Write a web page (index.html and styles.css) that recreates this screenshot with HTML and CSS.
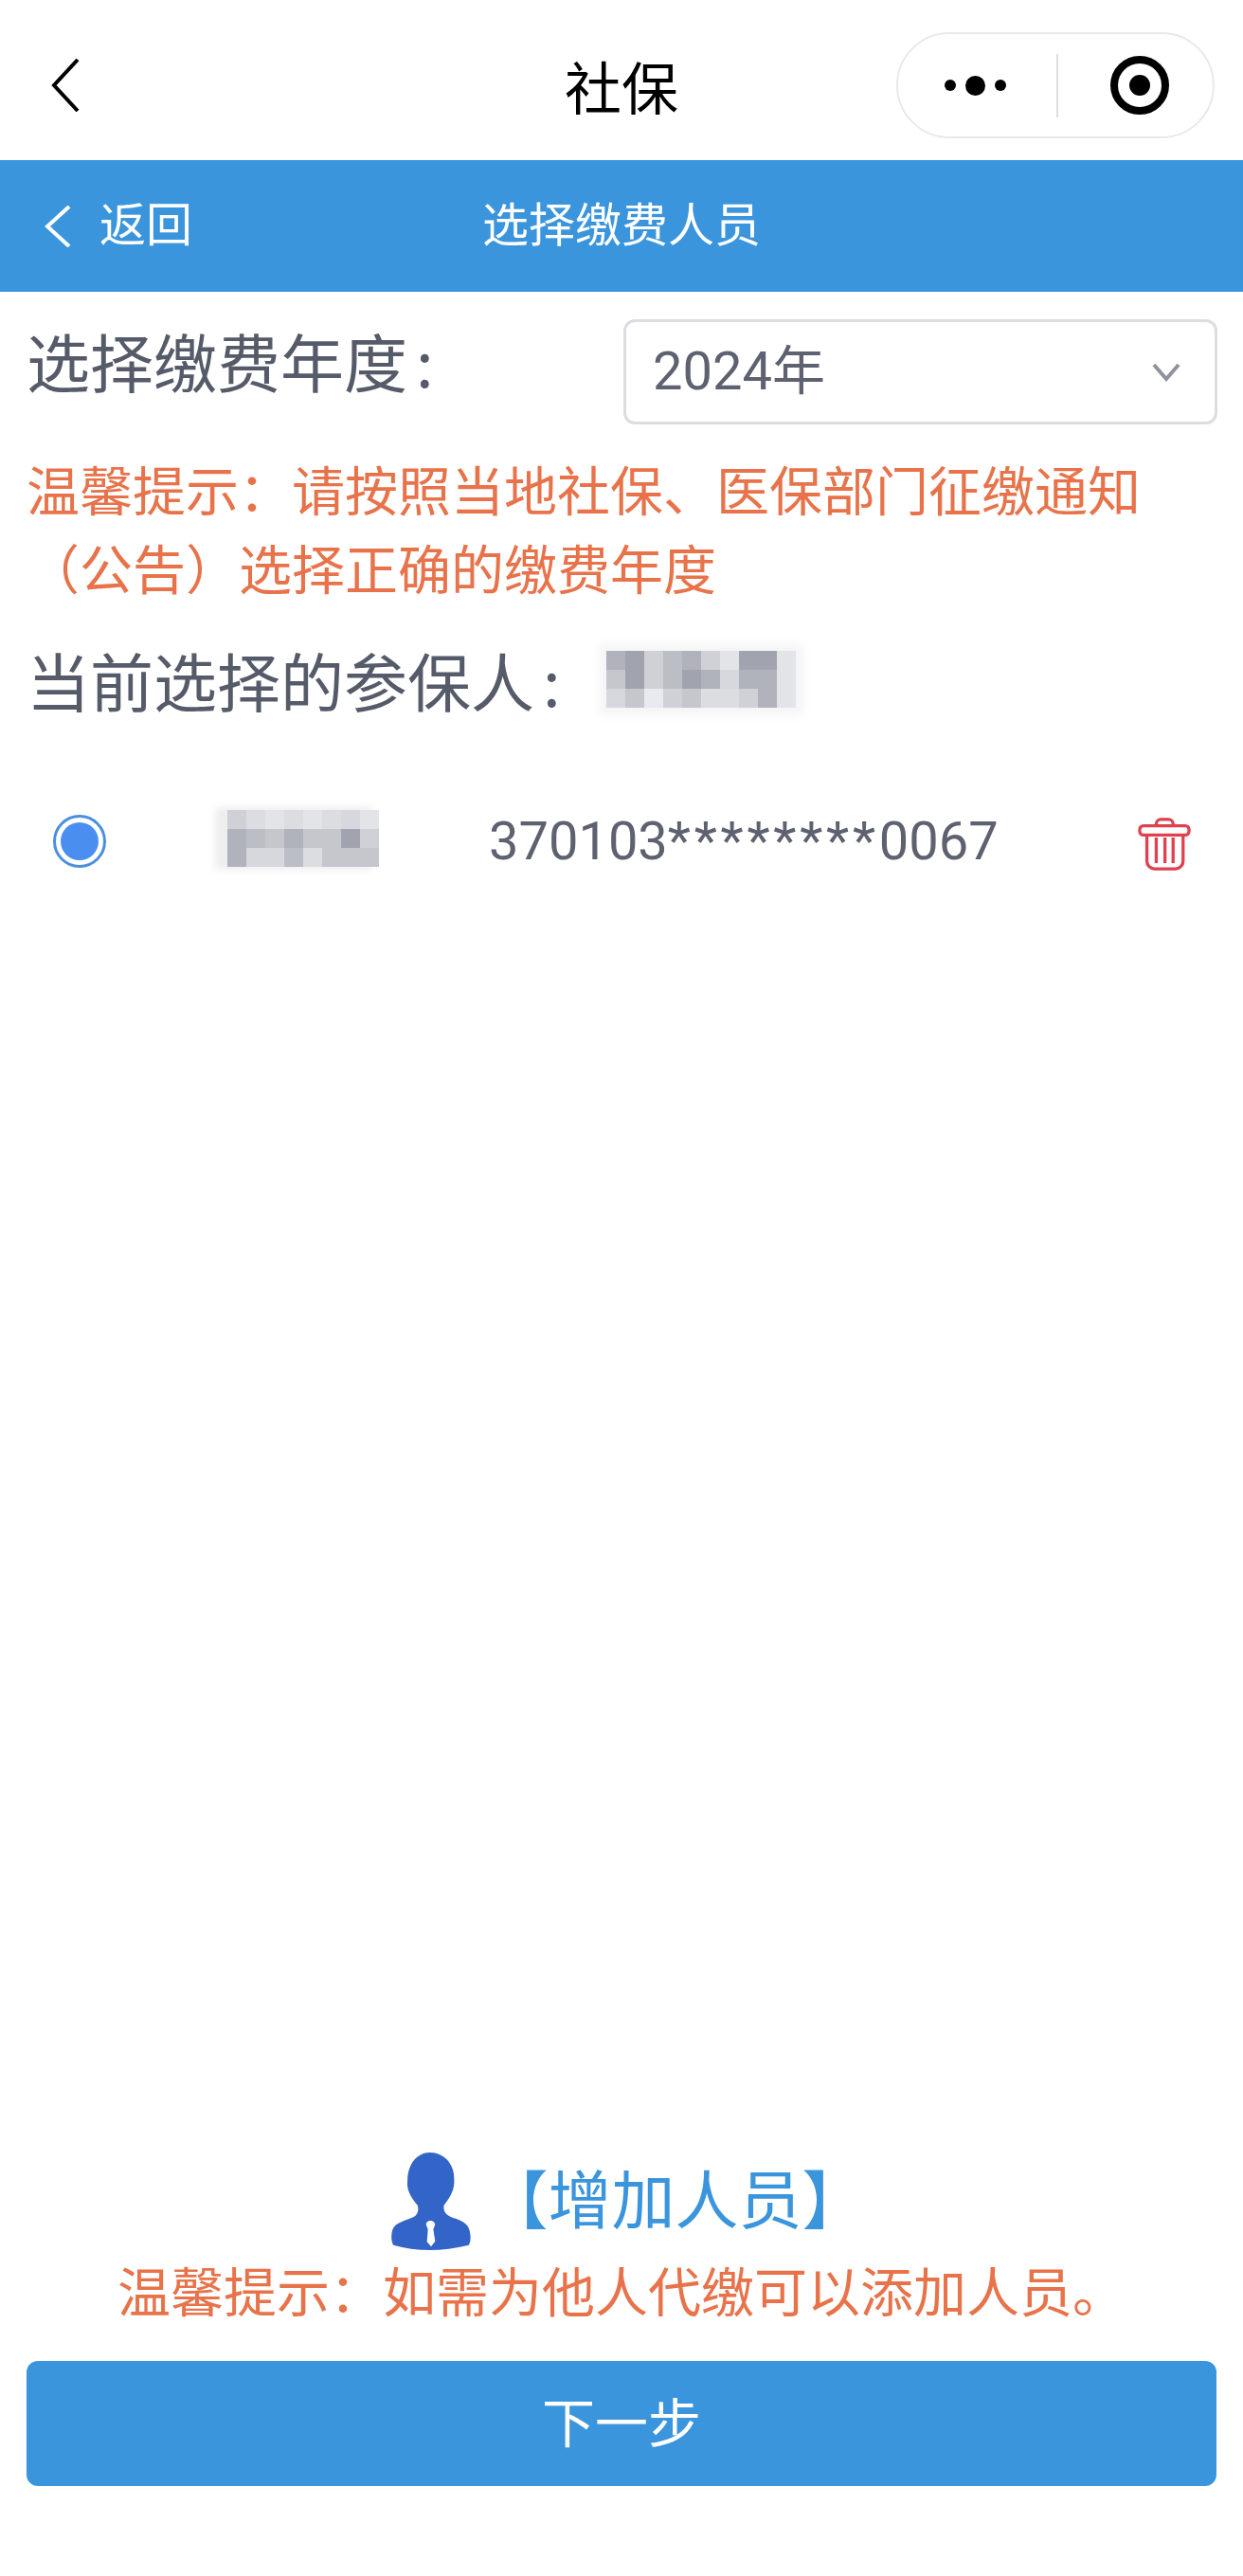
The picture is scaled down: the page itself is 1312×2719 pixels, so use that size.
FILE: index.html
```html
<!DOCTYPE html>
<html lang="zh-CN">
<head>
    <meta charset="UTF-8">
    <meta name="viewport" content="width=device-width, initial-scale=1.0">
    <title>社保</title>
    <link rel="stylesheet" href="styles.css">
</head>
<body>
    <div class="page">
        <header class="nav">
            <svg class="nav-back" viewBox="0 0 30 56" fill="none" stroke="#000" stroke-width="4"><path d="M28 1 L3 28 L28 55"/></svg>
            <div class="nav-title">社保</div>
            <div class="capsule">
                <div class="capsule-more">
                    <span class="dot"></span><span class="dot dot-big"></span><span class="dot"></span>
                </div>
                <div class="capsule-line"></div>
                <div class="capsule-target"><span></span></div>
            </div>
        </header>

        <div class="subhead">
            <div class="subhead-back">
                <svg class="subhead-arrow" viewBox="0 0 28 44" fill="none" stroke="#fff" stroke-width="4"><path d="M26 1 L3 22 L26 43"/></svg>
                <span class="subhead-text">返回</span>
            </div>
            <div class="subhead-text">选择缴费人员</div>
        </div>

        <main class="content">
            <div class="year-row">
                <div class="big-label year-label">选择缴费年度<span class="colon">:</span></div>
                <div class="select">
                    <span class="select-value">2024年</span>
                    <svg class="select-arrow" viewBox="0 0 30 20" fill="none" stroke="#8f939e" stroke-width="4"><path d="M2 2 L15 17 L28 2"/></svg>
                </div>
            </div>

            <p class="tip">温馨提示：请按照当地社保、医保部门征缴通知（公告）选择正确的缴费年度</p>

            <div class="current-row">
                <div class="big-label">当前选择的参保人<span class="colon">:</span></div>
                <div class="mosaic mosaic-10">
                    <i class="s2"></i><i class="s1"></i><i class="s5"></i><i class="s3"></i><i class="s2"></i><i class="s5"></i><i class="s8"></i><i class="s1"></i><i class="s1"></i><i class="s8"></i>
                    <i class="s4"></i><i class="s1"></i><i class="s5"></i><i class="s3"></i><i class="s1"></i><i class="s2"></i><i class="s6"></i><i class="s2"></i><i class="s2"></i><i class="s8"></i>
                    <i class="s6"></i><i class="s4"></i><i class="s9"></i><i class="s5"></i><i class="s4"></i><i class="s7"></i><i class="s7"></i><i class="s5"></i><i class="s2"></i><i class="s8"></i>
                </div>
            </div>

            <div class="person-row">
                <span class="radio"><span></span></span>
                <div class="mosaic mosaic-8">
                    <i class="s5"></i><i class="s7"></i><i class="s8"></i><i class="s7"></i><i class="s8"></i><i class="s7"></i><i class="s6"></i><i class="s8"></i>
                    <i class="s2"></i><i class="s3"></i><i class="s4"></i><i class="s2"></i><i class="s4"></i><i class="s4"></i><i class="s1"></i><i class="s5"></i>
                    <i class="s2"></i><i class="s6"></i><i class="s6"></i><i class="s3"></i><i class="s7"></i><i class="s4"></i><i class="s4"></i><i class="s4"></i>
                </div>
                <div class="id-no">370103<span class="stars">********</span>0067</div>
                <svg class="trash" viewBox="92 68 168 170" fill="none" stroke="#e0414f" stroke-width="10">
                    <path d="M150 92 v-4 a14 14 0 0 1 14-14 h26 a14 14 0 0 1 14 14 v4"/>
                    <rect x="97" y="94" width="158" height="30" rx="12"/>
                    <path d="M120 124 v84 a24 24 0 0 0 24 24 h68 a24 24 0 0 0 24-24 v-84"/>
                    <path d="M150 132 v82 M178 132 v82 M204 132 v82"/>
                </svg>
            </div>
        </main>

        <footer class="bottom">
            <div class="add-row">
                <svg class="add-icon" viewBox="98 68 252 310">
                    <path fill="#3365c8" d="M220 68 C262 68 297 100 297 150 C301 190 280 215 265 236 C262 250 268 264 285 272 C310 282 340 288 346 315 C351 335 350 352 344 362 C300 372 260 378 220 378 C180 378 140 372 104 362 C97 350 96 330 102 312 C110 290 150 282 170 272 C182 264 186 250 181 236 C165 215 145 190 149 160 C148 105 180 68 220 68 Z"/>
                    <path fill="#fff" d="M222 285 C232 285 238 292 236 300 L231 312 L237 350 L224 367 L211 352 L214 312 L209 300 C207 292 212 285 222 285 Z"/>
                </svg>
                <span class="add-text">【增加人员】</span>
            </div>
            <p class="add-tip">温馨提示：如需为他人代缴可以添加人员。</p>
            <button class="next-btn">下一步</button>
        </footer>
    </div>
</body>
</html>
```

FILE: styles.css
```css
* {
    box-sizing: border-box;
}

body {
    margin: 0;
    background-color: #fff;
    font-family: "Noto Sans CJK SC", "Noto Sans", sans-serif;
}

.page {
    display: flex;
    flex-direction: column;
    width: 1312px;
    height: 2719px;
    overflow: hidden;
}

/* top bar of the mini program */
.nav {
    display: grid;
    grid-template-columns: 1fr auto 1fr;
    align-items: center;
    height: 169px;
    padding: 11px 30px 0;
}

.nav-back {
    width: 30px;
    height: 56px;
    margin-left: 24px;
}

.nav-title {
    font-size: 60px;
    line-height: 70px;
    color: #000;
}

.capsule {
    display: flex;
    align-items: center;
    justify-self: end;
    width: 336px;
    height: 112px;
    border: 2px solid #e9e9e9;
    border-radius: 56px;
}

.capsule-more {
    display: flex;
    align-items: center;
    gap: 10px;
    padding-left: 49px;
    width: 167px;
}

.dot {
    width: 12px;
    height: 12px;
    border-radius: 50%;
    background-color: #000;
}

.dot-big {
    width: 21px;
    height: 21px;
}

.capsule-line {
    width: 2px;
    height: 67px;
    background-color: #ddd;
}

.capsule-target {
    display: flex;
    align-items: center;
    justify-content: center;
    width: 62px;
    height: 62px;
    margin-left: 55px;
    border: 8px solid #000;
    border-radius: 50%;
}

.capsule-target span {
    width: 22px;
    height: 22px;
    border-radius: 50%;
    background-color: #000;
}

.subhead {
    display: grid;
    grid-template-columns: 1fr auto 1fr;
    align-items: center;
    height: 139px;
    padding: 0 47px;
    background-color: #3b95dc;
    color: #fff;
    font-size: 49px;
    line-height: 60px;
}

.subhead-back {
    display: flex;
    align-items: center;
    gap: 30px;
}

.subhead-arrow {
    width: 28px;
    height: 44px;
}

.subhead-text {
    margin-bottom: 10px;
}

.content {
    flex: 1;
    padding: 29px 28px 0;
}

.year-row {
    display: flex;
    justify-content: space-between;
    align-items: flex-start;
}

.big-label {
    font-size: 67px;
    line-height: 80px;
    color: #565b69;
    white-space: nowrap;
}

.year-label {
    margin-top: 3px;
}

.colon {
    margin-left: 9px;
}

.select {
    display: flex;
    align-items: center;
    justify-content: space-between;
    width: 627px;
    height: 111px;
    margin-right: -1px;
    padding: 0 36px 0 28px;
    border: 3px solid #dcdde1;
    border-radius: 12px;
    font-family: Roboto, "Noto Sans CJK SC", sans-serif;
    font-size: 56px;
    color: #5e6270;
}

.select-value {
    margin-bottom: 12px;
}

.select-arrow {
    width: 30px;
    height: 20px;
}

.tip {
    margin: 25px 0 0;
    font-size: 56px;
    line-height: 83px;
    color: #e8734a;
}

.current-row {
    display: flex;
    align-items: center;
    margin-top: 38px;
}

.mosaic {
    display: grid;
    grid-auto-rows: 20px;
    flex: none;
    box-shadow: 0 0 10px 8px #f5f5f7;
}

.mosaic-10 {
    grid-template-columns: repeat(10, 20px);
    margin-left: 48px;
}

.mosaic-8 {
    grid-template-columns: repeat(8, 20px);
    margin-left: 128px;
    margin-top: -7px;
    box-shadow: -10px 0 8px 3px #eeeeef;
}

.s1 { background-color: #a1a4af; }
.s2 { background-color: #b1b3bc; }
.s3 { background-color: #bcbec6; }
.s4 { background-color: #c5c7cd; }
.s5 { background-color: #cfd1d6; }
.s6 { background-color: #d6d8dd; }
.s7 { background-color: #dcdde1; }
.s8 { background-color: #e3e4e8; }
.s9 { background-color: #e8eaef; }

.person-row {
    display: flex;
    align-items: center;
    height: 100px;
    margin-top: 81px;
    padding-left: 28px;
}

.radio {
    display: flex;
    align-items: center;
    justify-content: center;
    flex: none;
    width: 56px;
    height: 56px;
    border: 3px solid #4a8fe0;
    border-radius: 50%;
}

.radio span {
    width: 40px;
    height: 40px;
    border-radius: 50%;
    background-color: #4a8ff0;
}

.id-no {
    margin-left: 116px;
    font-family: Roboto, sans-serif;
    font-size: 56px;
    color: #5e6270;
    white-space: nowrap;
}

.stars {
    letter-spacing: 3.75px;
}

.trash {
    flex: none;
    width: 56px;
    height: 56px;
    margin-left: auto;
    margin-top: 6px;
    margin-right: 27px;
}

.bottom {
    display: flex;
    flex-direction: column;
    align-items: center;
    padding: 0 28px 95px;
}

.add-row {
    display: flex;
    align-items: flex-start;
    gap: 15px;
    height: 103px;
    margin-left: 14px;
}

.add-icon {
    width: 84px;
    height: 103px;
}

.add-text {
    margin-top: 6px;
    font-size: 67px;
    line-height: 80px;
    color: #3b95dc;
}

.add-tip {
    margin: 6px 0 0;
    font-size: 56px;
    line-height: 70px;
    color: #e8734a;
    white-space: nowrap;
}

.next-btn {
    width: 100%;
    height: 132px;
    margin-top: 41px;
    padding: 0 0 10px;
    border: none;
    border-radius: 12px;
    background-color: #3b95dc;
    color: #fff;
    font-family: inherit;
    font-size: 56px;
}
```
